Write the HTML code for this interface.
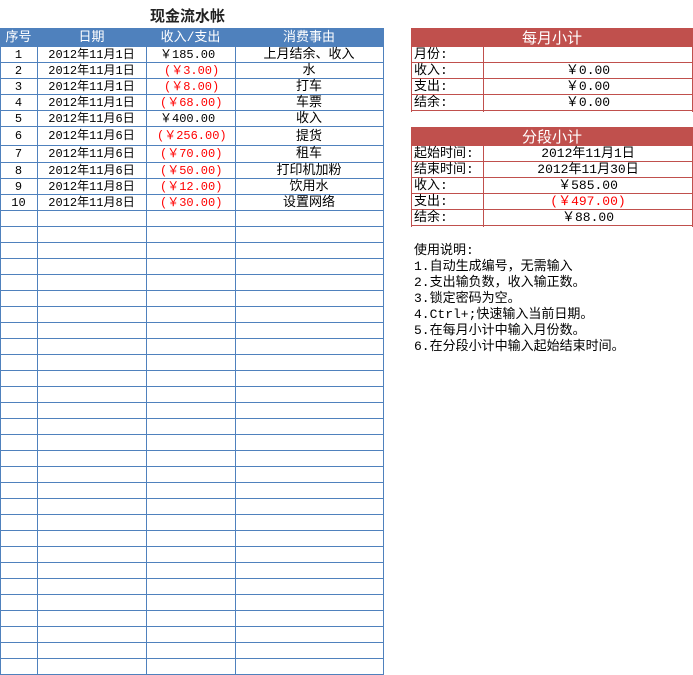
<!DOCTYPE html>
<html><head><meta charset="utf-8"><style>
*{margin:0;padding:0;box-sizing:border-box}
body{width:693px;height:675px;background:#fff;position:relative;overflow:hidden;font-family:"Liberation Mono","Noto Sans CJK SC",monospace;font-size:12px;color:#000}
.a{position:absolute}
.r{color:#f00}
.row{position:absolute;left:0;width:384px;border-bottom:1px solid #4f81bd;height:16px}
.row div{position:absolute;top:0;text-align:center;line-height:16px;white-space:nowrap}
.c1{left:0;width:37px}.c2{left:37px;width:109px}.c3{left:146px;width:89px}.c4{left:235px;width:148px}
.rt div.l{position:absolute;left:411px;width:282px;border-bottom:1px solid #c0504d;height:16px}
.l span{position:absolute;top:0;line-height:16px;white-space:nowrap;font-size:13px}
.l .k{left:3px}.l .v{left:72px;width:210px;text-align:center}
</style></head><body>
<div class="a" style="left:150px;top:6px;font-family:'Noto Sans CJK SC',sans-serif;font-weight:bold;font-size:15px;line-height:20px;color:#222">现金流水帐</div>

<div class="a" style="left:0;top:28px;width:384px;height:19px;background:#4f81bd;color:#fff">
<div class="a c1" style="text-align:center;line-height:19px;font-size:13px">序号</div>
<div class="a c2" style="text-align:center;line-height:19px;font-size:13px">日期</div>
<div class="a c3" style="text-align:center;line-height:19px;font-size:13px">收入/支出</div>
<div class="a c4" style="text-align:center;line-height:19px;font-size:13px">消费事由</div>
</div>
<div class="a" style="left:0;top:227px;width:384px;height:448px;background:repeating-linear-gradient(to bottom,transparent 0,transparent 15px,#4f81bd 15px,#4f81bd 16px)"></div>
<div class="a" style="left:0;top:47px;width:1px;height:628px;background:#4f81bd"></div>
<div class="a" style="left:37px;top:47px;width:1px;height:628px;background:#4f81bd"></div>
<div class="a" style="left:146px;top:47px;width:1px;height:628px;background:#4f81bd"></div>
<div class="a" style="left:235px;top:47px;width:1px;height:628px;background:#4f81bd"></div>
<div class="a" style="left:383px;top:47px;width:1px;height:628px;background:#4f81bd"></div>

<div class="row" style="top:47px"><div class="c1">1</div><div class="c2">2012年11月1日</div><div class="c3" style="text-align:left;padding-left:14px">￥185.00</div><div class="c4" style="font-size:13px">上月结余、收入</div></div>
<div class="row" style="top:63px"><div class="c1">2</div><div class="c2">2012年11月1日</div><div class="c3 r" style="text-align:left;padding-left:18px">(￥3.00)</div><div class="c4" style="font-size:13px">水</div></div>
<div class="row" style="top:79px"><div class="c1">3</div><div class="c2">2012年11月1日</div><div class="c3 r" style="text-align:left;padding-left:18px">(￥8.00)</div><div class="c4" style="font-size:13px">打车</div></div>
<div class="row" style="top:95px"><div class="c1">4</div><div class="c2">2012年11月1日</div><div class="c3 r" style="text-align:left;padding-left:14px">(￥68.00)</div><div class="c4" style="font-size:13px">车票</div></div>
<div class="row" style="top:111px"><div class="c1">5</div><div class="c2">2012年11月6日</div><div class="c3" style="text-align:left;padding-left:14px">￥400.00</div><div class="c4" style="font-size:13px">收入</div></div>
<div class="row" style="top:127px;height:19px"><div class="c1" style="line-height:19px">6</div><div class="c2" style="line-height:19px">2012年11月6日</div><div class="c3 r" style="text-align:left;padding-left:11px;line-height:19px">(￥256.00)</div><div class="c4" style="line-height:19px;font-size:13px">提货</div></div>
<div class="row" style="top:146px;height:17px"><div class="c1">7</div><div class="c2">2012年11月6日</div><div class="c3 r" style="text-align:left;padding-left:14px">(￥70.00)</div><div class="c4" style="font-size:13px">租车</div></div>
<div class="row" style="top:163px"><div class="c1">8</div><div class="c2">2012年11月6日</div><div class="c3 r" style="text-align:left;padding-left:14px">(￥50.00)</div><div class="c4" style="font-size:13px">打印机加粉</div></div>
<div class="row" style="top:179px"><div class="c1">9</div><div class="c2">2012年11月8日</div><div class="c3 r" style="text-align:left;padding-left:14px">(￥12.00)</div><div class="c4" style="font-size:13px">饮用水</div></div>
<div class="row" style="top:195px"><div class="c1">10</div><div class="c2">2012年11月8日</div><div class="c3 r" style="text-align:left;padding-left:14px">(￥30.00)</div><div class="c4" style="font-size:13px">设置网络</div></div>
<div class="row" style="top:211px"></div>

<div class="a" style="left:411px;top:28px;width:282px;height:19px;background:#c0504d;color:#fff;text-align:center;font-size:15px;line-height:19px;font-family:'Noto Sans CJK SC',sans-serif">每月小计</div>
<div class="a" style="left:411px;top:47px;width:1px;height:65px;background:#c0504d"></div>
<div class="a" style="left:692px;top:47px;width:1px;height:65px;background:#c0504d"></div>
<div class="a" style="left:483px;top:47px;width:1px;height:65px;background:#c0504d"></div>
<div class="rt">
<div class="l" style="top:47px"><span class="k">月份:</span></div>
<div class="l" style="top:63px"><span class="k">收入:</span><span class="v">￥0.00</span></div>
<div class="l" style="top:79px"><span class="k">支出:</span><span class="v">￥0.00</span></div>
<div class="l" style="top:95px"><span class="k">结余:</span><span class="v">￥0.00</span></div>
</div>

<div class="a" style="left:411px;top:127px;width:282px;height:19px;background:#c0504d;color:#fff;text-align:center;font-size:15px;line-height:19px;font-family:'Noto Sans CJK SC',sans-serif">分段小计</div>
<div class="a" style="left:411px;top:146px;width:1px;height:81px;background:#c0504d"></div>
<div class="a" style="left:692px;top:146px;width:1px;height:81px;background:#c0504d"></div>
<div class="a" style="left:483px;top:146px;width:1px;height:81px;background:#c0504d"></div>
<div class="rt">
<div class="l" style="top:146px"><span class="k">起始时间:</span><span class="v">2012年11月1日</span></div>
<div class="l" style="top:162px"><span class="k">结束时间:</span><span class="v">2012年11月30日</span></div>
<div class="l" style="top:178px"><span class="k">收入:</span><span class="v">￥585.00</span></div>
<div class="l" style="top:194px"><span class="k">支出:</span><span class="v r">(￥497.00)</span></div>
<div class="l" style="top:210px"><span class="k">结余:</span><span class="v">￥88.00</span></div>
</div>

<div class="a" style="left:414px;top:243px;line-height:16px;white-space:pre;font-size:13px">使用说明:
1.自动生成编号，无需输入
2.支出输负数，收入输正数。
3.锁定密码为空。
4.Ctrl+;快速输入当前日期。
5.在每月小计中输入月份数。
6.在分段小计中输入起始结束时间。</div>
</body></html>
